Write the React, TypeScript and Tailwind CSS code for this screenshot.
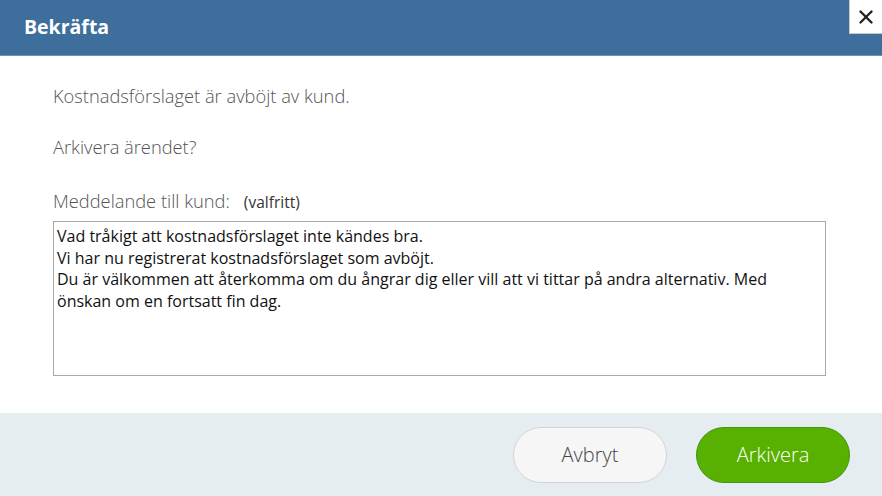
import { X } from "lucide-react"

const msg =
  "Vad tråkigt att kostnadsförslaget inte kändes bra.\nVi har nu registrerat kostnadsförslaget som avböjt.\nDu är välkommen att återkomma om du ångrar dig eller vill att vi tittar på andra alternativ. Med önskan om en fortsatt fin dag."

export default function App() {
  return (
    <div className="flex h-[496px] w-[882px] flex-col overflow-hidden bg-white font-['Open_Sans',sans-serif]">
      <header className="flex h-[56px] shrink-0 items-start justify-between border-b border-[#6f93b5] bg-[#3d6e9c]">
        <h1 className="pl-[24px] pt-[12px] text-[19.5px] font-bold text-white">Bekräfta</h1>
        <button className="flex h-[34px] w-[33px] items-center justify-center border-b border-l border-[#c9c9c9] bg-white text-[#222]">
          <X size={22} strokeWidth={2.6} />
        </button>
      </header>

      <main className="flex flex-1 flex-col px-[53px] pt-[25px] font-light text-[#555]">
        <p className="text-[18.3px] leading-[30px]">Kostnadsförslaget är avböjt av kund.</p>
        <p className="mt-[21px] text-[18.3px] leading-[30px]">Arkivera ärendet?</p>
        <div className="mt-[24px] flex items-baseline gap-[14px]">
          <span className="text-[18.3px] leading-[30px]">Meddelande till kund:</span>
          <span className="text-[15.5px] font-normal text-[#333]">(valfritt)</span>
        </div>
        <textarea
          className="mt-[5px] h-[155px] w-[773px] resize-none border border-[#a9a9a9] pb-[4px] pl-[3px] pr-[50px] pt-[4px] text-[16px] font-normal leading-[21.7px] text-[#111] outline-none"
          defaultValue={msg}
        />
      </main>

      <footer className="flex h-[83px] shrink-0 items-center justify-end gap-[29px] bg-[#e6edf1] pr-[32px]">
        <button className="h-[56px] w-[154px] rounded-full border border-[#d3d3d3] bg-[#f6f6f6] text-[20px] font-light text-[#444]">
          Avbryt
        </button>
        <button className="h-[56px] w-[154px] rounded-full border border-[#3f9610] bg-[#58b000] text-[20px] font-light text-white">
          Arkivera
        </button>
      </footer>
    </div>
  )
}
